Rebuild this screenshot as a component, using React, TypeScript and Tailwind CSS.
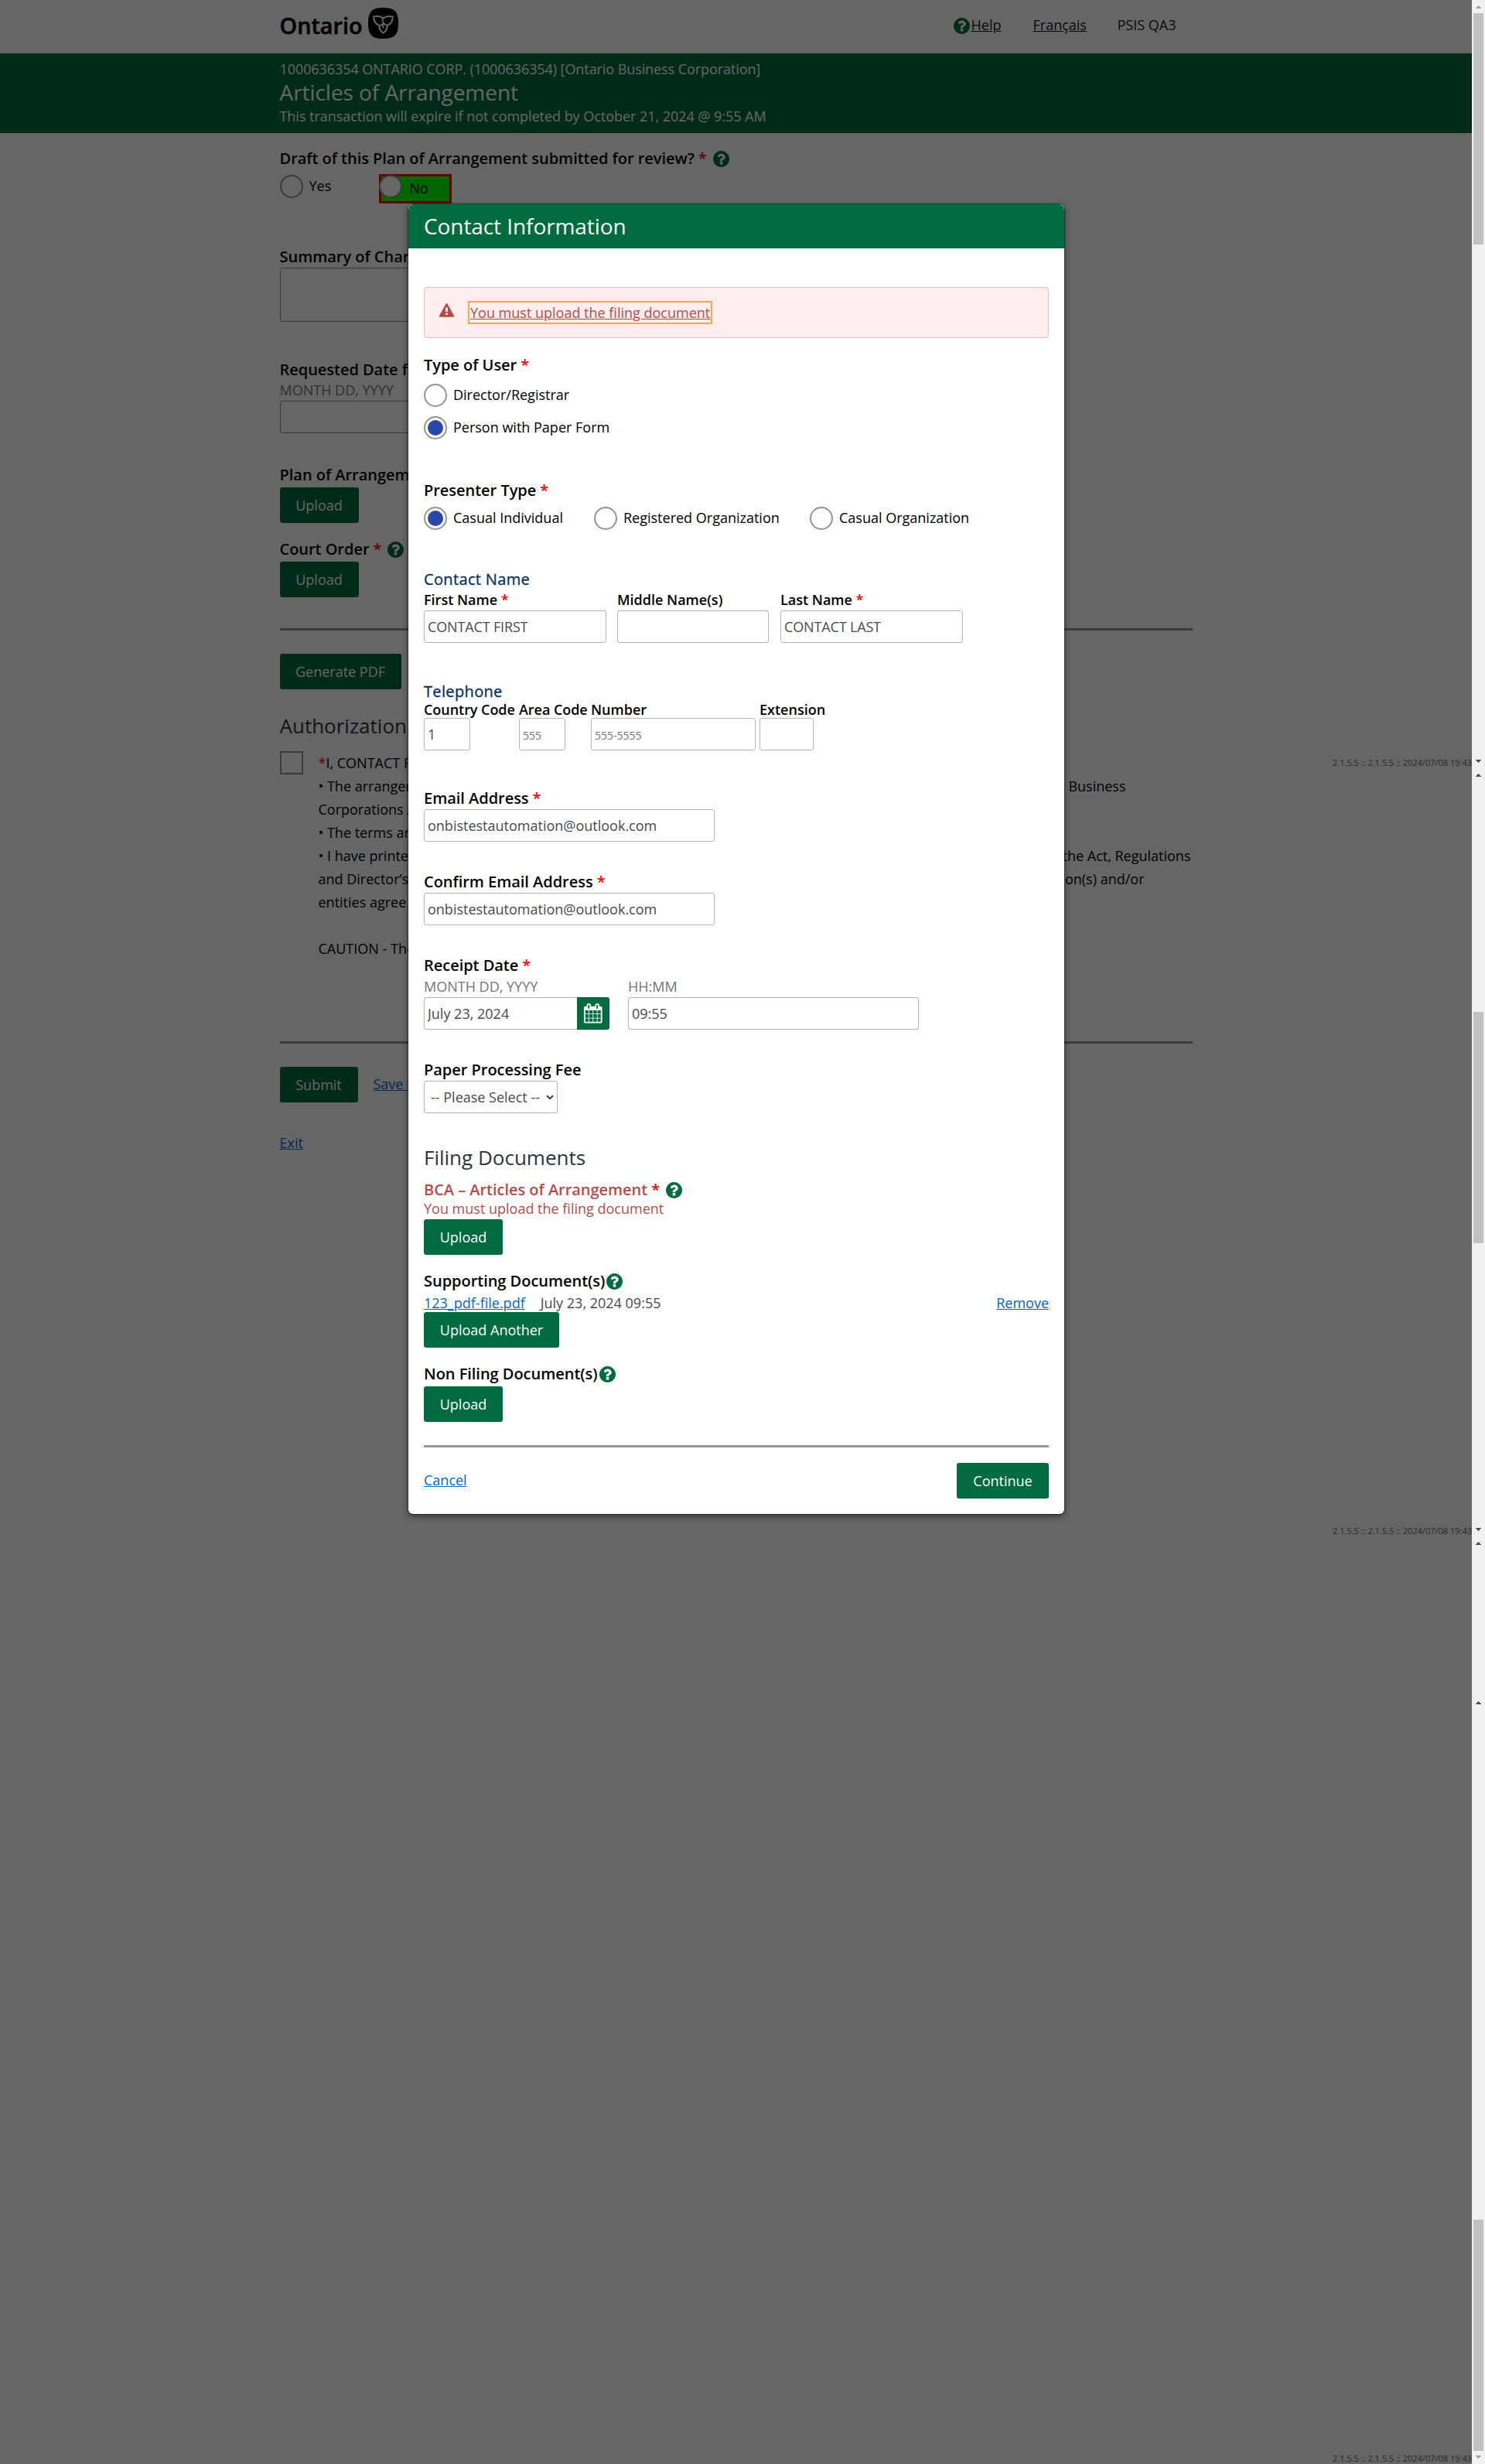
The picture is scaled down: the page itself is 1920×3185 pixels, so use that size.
import React from 'react';

function HelpIcon({ className = '' }: { className?: string }) {
  return (
    <svg viewBox="128 128 1536 1536" className={`h-[21px] w-[21px] shrink-0 fill-[#006b3f] ${className}`}>
      <path d="M1024 1376v-192q0-14-9-23t-23-9h-192q-14 0-23 9t-9 23v192q0 14 9 23t23 9h192q14 0 23-9t9-23zm256-672q0-88-55.5-163t-138.5-116-170-41q-243 0-371 213-15 24 8 42l132 100q7 6 19 6 16 0 25-12 53-68 86-92 34-24 86-24 48 0 85.5 26t37.5 59q0 38-20 61t-68 45q-63 28-115.5 86.5t-52.5 125.5v36q0 14 9 23t23 9h192q14 0 23-9t9-23q0-19 21.5-49.5t54.5-49.5q32-18 49-28.5t46-35 44.5-48 28-60.5 12.5-81zm384 192q0 209-103 385.5t-279.5 279.5-385.5 103-385.5-103-279.5-279.5-103-385.5 103-385.5 279.5-279.5 385.5-103 385.5 103 279.5 279.5 103 385.5z" />
    </svg>
  );
}

function WarningIcon() {
  return (
    <svg viewBox="0 0 1792 1664" className="mt-[20px] ml-[19px] h-[18px] w-[19px] shrink-0 fill-[#b94a48]">
      <path d="M1024 1375v-190q0-14-9.5-23.5t-22.5-9.5h-192q-13 0-22.5 9.5t-9.5 23.5v190q0 14 9.5 23.5t22.5 9.5h192q13 0 22.5-9.5t9.5-23.5zm-2-374l18-459q0-12-10-19-13-11-24-11h-220q-11 0-24 11-10 7-10 21l17 457q0 10 10 16.5t24 6.5h185q14 0 23.5-6.5t10.5-16.5zm-14-934l768 1408q35 63-2 126-17 29-46.5 46t-63.5 17h-1536q-34 0-63.5-17t-46.5-46q-37-63-2-126l768-1408q17-31 47-49t65-18 65 18 47 49z" />
    </svg>
  );
}

function CalendarIcon() {
  return (
    <svg viewBox="0 0 1792 1792" className="h-[25.5px] w-[25.5px] fill-white">
      <path d="M192 1664h288v-288h-288v288zm352 0h320v-288h-320v288zm-352-352h288v-320h-288v320zm352 0h320v-320h-320v320zm-352-384h288v-288h-288v288zm736 736h320v-288h-320v288zm-384-736h320v-288h-320v288zm768 736h288v-288h-288v288zm-384-352h320v-320h-320v320zm-352-864v-288q0-13-9.5-22.5t-22.5-9.5h-64q-13 0-22.5 9.5t-9.5 22.5v288q0 13 9.5 22.5t22.5 9.5h64q13 0 22.5-9.5t9.5-22.5zm736 864h288v-320h-288v320zm-384-384h320v-288h-320v288zm384 0h288v-288h-288v288zm32-480v-288q0-13-9.5-22.5t-22.5-9.5h-64q-13 0-22.5 9.5t-9.5 22.5v288q0 13 9.5 22.5t22.5 9.5h64q13 0 22.5-9.5t9.5-22.5zm384-64v1280q0 52-38 90t-90 38h-1408q-52 0-90-38t-38-90v-1280q0-52 38-90t90-38h128v-96q0-66 47-113t113-47h64q66 0 113 47t47 113v96h384v-96q0-66 47-113t113-47h64q66 0 113 47t47 113v96h128q52 0 90 38t38 90z" />
    </svg>
  );
}

function Trillium() {
  return (
    <svg viewBox="0 0 39 40" className="h-10 w-[39px]">
      <path d="M19.5 0C34 0 39 5 39 20S34 40 19.5 40 0 35 0 20 5 0 19.5 0Z" fill="#000" />
      <g fill="none" stroke="#fff" strokeWidth="2" strokeLinejoin="round" strokeLinecap="round">
        <path d="M7.2 11.4C12 10.6 16.500 11 19.500 13.800C22.500 11 27 10.600 31.800 11.400C31.800 17 28.800 21.300 24.700 22.800C25 27 22.700 30.500 19.500 32.800C16.300 30.500 14 27 14.300 22.800C10.200 21.300 7.200 17 7.200 11.400Z" />
        <path d="M19.500 13.800C18 16 18.500 18.500 20.200 20.400C21.500 22 23.200 22.800 24.700 22.800M14.300 22.800C17.200 22.600 19 21.500 20.200 19.600M20.200 20.400C18.400 22.300 18.600 24.300 19.800 25.800" strokeWidth="1.700" />
      </g>
    </svg>
  );
}

function Label({ children, required, help, className = '' }: { children: React.ReactNode; required?: boolean; help?: boolean; className?: string }) {
  return (
    <div className={`flex h-[27px] items-start text-[20px] leading-[27px] font-semibold tracking-[-0.03px] whitespace-nowrap ${className}`}>
      <span>{children}</span>
      {required && <span className="ml-[5px] text-[#ff0000]">*</span>}
      {help && <HelpIcon className={required ? 'mt-[4px] ml-[8px]' : 'mt-[4px] ml-[2px]'} />}
    </div>
  );
}

function Radio({ label, checked, className = '' }: { label: string; checked?: boolean; className?: string }) {
  return (
    <div className={`flex h-[30px] items-start ${className}`}>
      <span className="flex h-[30px] w-[30px] items-center justify-center rounded-full border-2 border-[#949494] bg-white">
        {checked && <span className="h-5 w-5 rounded-full bg-[#2847a8]" />}
      </span>
      <span className="mt-[2px] ml-2 whitespace-nowrap">{label}</span>
    </div>
  );
}

function Button({ children, className = '' }: { children: React.ReactNode; className?: string }) {
  return (
    <button className={`flex h-[46px] shrink-0 items-center justify-center rounded-[3px] bg-[#006b3f] whitespace-nowrap text-white ${className}`}>
      {children}
    </button>
  );
}

function Field({ value, placeholder, className = '' }: { value?: string; placeholder?: string; className?: string }) {
  return (
    <input
      readOnly
      value={value ?? ''}
      placeholder={placeholder}
      className={`block h-[42px] shrink-0 rounded-[3px] border border-[#b5b5b5] bg-white px-1 text-[18px] leading-[24px] text-[#4a4a4a] outline-none placeholder:text-[14px] placeholder:text-[#757575] ${className}`}
    />
  );
}

function Clause({ left, right, end }: { left: React.ReactNode; right?: string; end?: string }) {
  return (
    <div className="flex h-[30px] justify-between whitespace-nowrap">
      <span>{left}</span>
      {right && <span className={end}>{right}</span>}
    </div>
  );
}

function Arrow({ up, color }: { up?: boolean; color: string }) {
  return (
    <svg viewBox="0 0 7 4" className={`mx-auto block h-1 w-[7px] ${color}`} shapeRendering="crispEdges">
      {up ? <path d="M3 0h1v1h1v1h1v1h1v1H0V3h1V2h1V1h1z" /> : <path d="M0 0h7v1H6v1H5v1H4v1H3V3H2V2H1V1H0z" />}
    </svg>
  );
}

function Scrollbar() {
  return (
    <div className="w-[17px] shrink-0 bg-[#f1f1f1]">
      <div className="h-[7px]" />
      <Arrow up color="fill-[#a3a3a3]" />
      <div className="mx-auto mt-[6px] h-[299px] w-[13px] bg-[#c1c1c1]" />
      <div className="h-[666px]" />
      <Arrow color="fill-[#505050]" />
      <div className="h-[14px]" />
      <Arrow up color="fill-[#505050]" />
      <div className="mx-auto mt-[304px] h-[299px] w-[13px] bg-[#c1c1c1]" />
      <div className="h-[368px]" />
      <Arrow color="fill-[#505050]" />
      <div className="h-[14px]" />
      <Arrow up color="fill-[#505050]" />
      <div className="h-[202px]" />
      <Arrow up color="fill-[#505050]" />
      <div className="mx-auto mt-[666px] h-[299px] w-[13px] bg-[#c1c1c1]" />
      <div className="h-[6px]" />
      <Arrow color="fill-[#a3a3a3]" />
    </div>
  );
}

function Version({ className }: { className: string }) {
  return (
    <div className={`absolute right-0 text-[11px] leading-[15px] whitespace-nowrap text-[#666] ${className}`}>
      2.1.5.5 :: 2.1.5.5 :: 2024/07/08 19:43
    </div>
  );
}

function BackgroundPage() {
  return (
    <div className="text-black">
      <header className="flex h-[69px] items-start pl-[361.5px] text-[#1a1a1a]">
        <div className="flex w-[871px] items-start">
          <span className="mt-[13px] w-[114.5px] text-[28.8px] leading-[39px] font-semibold text-black [-webkit-text-stroke:0.6px_#000]">Ontario</span>
          <span className="mt-[10px]"><Trillium /></span>
        </div>
        <HelpIcon className="mt-[23px]" />
        <a className="mt-[20px] ml-[2px] w-[80px] underline">Help</a>
        <a className="mt-[20px] w-[109px] underline">Français</a>
        <span className="mt-[20px]">PSIS QA3</span>
      </header>
      <div className="h-[103px] bg-[#006b3f] pt-2 pl-[361.5px] text-white">
        <div className="tracking-[-0.08px]">1000636354 ONTARIO CORP. (1000636354) [Ontario Business Corporation]</div>
        <h1 className="-mt-px text-[28px] leading-[38px] tracking-[-0.05px]">Articles of Arrangement</h1>
        <div className="tracking-[-0.04px]">This transaction will expire if not completed by October 21, 2024 @ 9:55 AM</div>
      </div>
      <main className="ml-[361.5px] w-[1180px]">
        <Label required help className="mt-[19px]">Draft of this Plan of Arrangement submitted for review?</Label>
        <div className="mt-[7px] flex h-[38px] items-start">
          <Radio label="Yes" className="mt-px w-[128px]" />
          <div className="flex h-[38px] w-[94px] border-[3px] border-[#ff0000] bg-[#00ff00]">
            <span className="-mt-[2px] -ml-[3px] h-[30px] w-[30px] rounded-full border-2 border-[#949494] bg-white" />
            <span className="mt-[3px] ml-[10px]">No</span>
          </div>
        </div>
        <Label className="mt-[55px]">Summary of Changes</Label>
        <div className="mt-px h-[70px] w-[600px] rounded-[3px] border border-[#949494]" />
        <Label className="mt-[48px]">Requested Date for</Label>
        <div className="mt-px text-[#757575]">MONTH DD, YYYY</div>
        <div className="mt-[2px] h-[42px] w-[376px] rounded-[3px] border border-[#949494]" />
        <Label className="mt-[40px]">Plan of Arrangement</Label>
        <Button className="mt-[3px] w-[102px]">Upload</Button>
        <Label required help className="mt-[20px]">Court Order</Label>
        <Button className="mt-[3px] w-[102px]">Upload</Button>
        <div className="mt-[40px] h-[3px] bg-[#949494]" />
        <Button className="mt-[30px] w-[157px]">Generate PDF</Button>
        <h2 className="mt-[29px] text-[26px] leading-[36px] text-[#2b3440]">Authorization</h2>
        <div className="mt-[15px] flex">
          <span className="mr-[20px] h-[30px] w-[30px] shrink-0 border-2 border-[#949494]" />
          <div className="grow leading-[30px]">
            <Clause left={<><span className="text-[#ff0000]">*</span>I, CONTACT FIRST</>} />
            <Clause left="• The arrangement" right="the Business" end="mr-[86px]" />
            <Clause left="Corporations Act" />
            <Clause left="• The terms and" />
            <Clause left="• I have printed" right="the Act, Regulations" end="mr-[2px]" />
            <Clause left="and Director’s" right="person(s) and/or" end="mr-[62px]" />
            <Clause left="entities agree" />
            <div className="h-[30px]" />
            <Clause left="CAUTION - The" />
          </div>
        </div>
        <div className="mt-[105px] h-[3px] bg-[#949494]" />
        <div className="mt-[30px] flex h-[46px]">
          <Button className="w-[101px]">Submit</Button>
          <a className="mt-[10px] ml-[20px] whitespace-nowrap text-[#0066cc] underline">Save for</a>
        </div>
        <a className="mt-[40px] block text-[#0066cc] underline">Exit</a>
      </main>
    </div>
  );
}

function ContactDialog() {
  return (
    <div className="absolute top-[264px] left-[528px] w-[848px] rounded-[6px] bg-white pb-5 text-black shadow-[0_0_0_1px_rgba(0,0,0,0.4),0_3px_9px_rgba(0,0,0,0.5)]">
      <div className="h-[57px] rounded-t-[7px] bg-[#006b3f] pt-[9px] pl-5 text-[28px] leading-[38px] tracking-[-0.08px] text-white">Contact Information</div>
      <div className="px-5">
        <div className="mt-[50px] flex h-[66px] items-start rounded-[4px] border border-[#ffb6c1] bg-[#ffeeee] text-[#b94a48]">
          <WarningIcon />
          <a className="mt-[20px] ml-[21px] underline outline-2 outline-offset-1 outline-[#ffa347]">You must upload the filing document</a>
        </div>

        <Label required className="mt-[21px]">Type of User</Label>
        <Radio label="Director/Registrar" className="mt-[11px]" />
        <Radio label="Person with Paper Form" checked className="mt-3" />

        <Label required className="mt-[52px]">Presenter Type</Label>
        <div className="mt-2 flex">
          <Radio label="Casual Individual" checked className="w-[220px]" />
          <Radio label="Registered Organization" className="w-[279px]" />
          <Radio label="Casual Organization" />
        </div>

        <div className="mt-[50px] text-[20px] leading-[27px] text-[#00305c] [-webkit-text-stroke:0.3px_#00305c]">
          <span className="tracking-[0.35px]">Contact Name</span>
        </div>
        <div className="mt-px flex font-semibold">
          <span className="w-[250px]">First Name <span className="text-[#ff0000]">*</span></span>
          <span className="w-[211px]">Middle Name(s)</span>
          <span>Last Name <span className="text-[#ff0000]">*</span></span>
        </div>
        <div className="mt-[2px] flex">
          <Field value="CONTACT FIRST" className="mr-[14px] w-[236px] tracking-[-0.15px]" />
          <Field className="mr-[15px] w-[196px]" />
          <Field value="CONTACT LAST" className="w-[236px] tracking-[-0.15px]" />
        </div>

        <div className="mt-[49px] text-[20px] leading-[27px] text-[#00305c] [-webkit-text-stroke:0.3px_#00305c]">
          <span className="tracking-[0.35px]">Telephone</span>
        </div>
        <div className="-mt-[2px] flex font-semibold whitespace-nowrap">
          <span className="w-[123px] tracking-[-0.05px]">Country Code</span>
          <span className="w-[93px] tracking-[-0.05px]">Area Code</span>
          <span className="w-[218px]">Number</span>
          <span>Extension</span>
        </div>
        <div className="-mt-px flex">
          <Field value="1" className="mr-[63px] w-[60px]" />
          <Field placeholder="555" className="mr-[33px] w-[60px]" />
          <Field placeholder="555-5555" className="mr-[5px] w-[213px]" />
          <Field className="w-[70px]" />
        </div>

        <Label required className="mt-[48px]">Email Address</Label>
        <Field value="onbistestautomation@outlook.com" className="mt-px w-[376px]" />
        <Label required className="mt-[38px]">Confirm Email Address</Label>
        <Field value="onbistestautomation@outlook.com" className="mt-px w-[376px]" />

        <Label required className="mt-[38px]">Receipt Date</Label>
        <div className="mt-[2px] flex text-[#757575]">
          <span className="w-[264px]">MONTH DD, YYYY</span>
          <span>HH:MM</span>
        </div>
        <div className="mt-[2px] flex">
          <Field value="July 23, 2024" className="w-[198px] rounded-r-none border-r-0" />
          <div className="mr-[24px] flex h-[42px] w-[42px] items-center justify-center rounded-r-[3px] bg-[#006b3f]">
            <CalendarIcon />
          </div>
          <Field value="09:55" className="w-[376px]" />
        </div>

        <Label className="mt-[38px]">Paper Processing Fee</Label>
        <div className="mt-px flex h-[42px] w-[173px] items-center justify-between rounded-[3px] border border-[#b5b5b5] pr-[4px] pl-[8px] whitespace-nowrap text-[#4a4a4a]">
          <span>-- Please Select --</span>
          <svg viewBox="0 0 10 7" className="h-[7px] w-[10px] fill-none stroke-[#3a3a3a]" strokeWidth="2">
            <path d="M1 1.200 5 5.200 9 1.200" />
          </svg>
        </div>

        <h2 className="mt-[39px] text-[26px] leading-[36px] text-[#2b3440]">Filing Documents</h2>
        <Label required help className="mt-[10px] text-[#b94a48]">BCA – Articles of Arrangement</Label>
        <div className="-mt-px text-[#b94a48]">You must upload the filing document</div>
        <Button className="mt-[2px] w-[102px]">Upload</Button>

        <Label help className="mt-[20px]">Supporting Document(s)</Label>
        <div className="mt-[3px] flex">
          <a className="text-[#0066cc] underline">123_pdf-file.pdf</a>
          <span className="ml-[20px] text-[#4a4a4a]">July 23, 2024 09:55</span>
          <a className="ml-auto text-[#0066cc] underline">Remove</a>
        </div>
        <Button className="w-[175px]">Upload Another</Button>

        <Label help className="mt-[20px]">Non Filing Document(s)</Label>
        <Button className="mt-[3px] w-[102px]">Upload</Button>

        <div className="mt-[30px] h-[3px] bg-[#949494]" />
        <div className="mt-5 flex items-start justify-between">
          <a className="mt-[10px] text-[#0066cc] underline">Cancel</a>
          <Button className="w-[119px]">Continue</Button>
        </div>
      </div>
    </div>
  );
}

export default function App() {
  return (
    <div className="flex h-[3185px] w-[1920px] overflow-hidden bg-white font-['Open_Sans',sans-serif] text-[18px] leading-[24px]">
      <div className="relative w-[1903px] shrink-0">
        <BackgroundPage />
        <Version className="top-[978px]" />
        <Version className="top-[1971px]" />
        <Version className="top-[3170px]" />
        <div className="absolute inset-0 bg-black/60" />
        <ContactDialog />
      </div>
      <Scrollbar />
    </div>
  );
}
